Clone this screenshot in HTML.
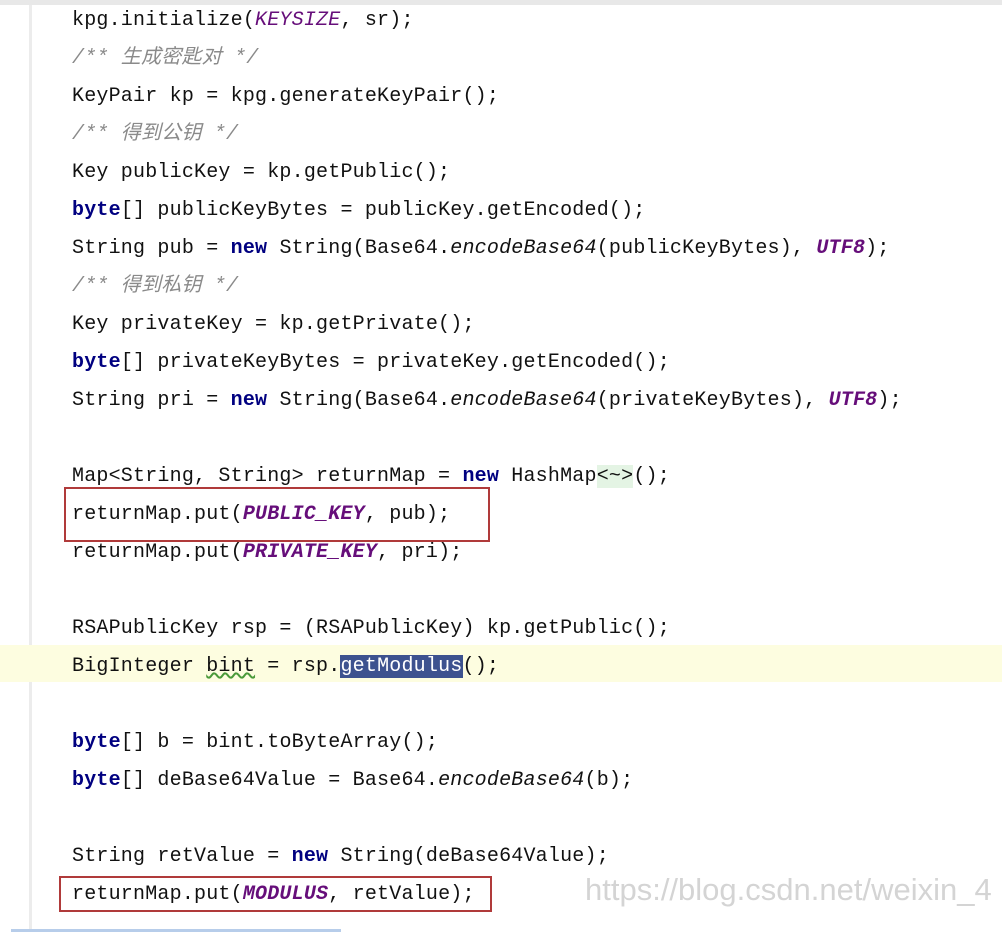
<!DOCTYPE html>
<html><head><meta charset="utf-8"><style>
html,body{margin:0;padding:0;background:#fff;width:1002px;height:932px;overflow:hidden;position:relative}
.top{position:absolute;left:0;top:0;width:1002px;height:5px;background:#e8e8e8}
.gut{position:absolute;left:29px;top:5px;width:3px;height:927px;background:#ececec}
.hl{position:absolute;left:0;top:645px;width:1002px;height:37px;background:#fdfde0}
.code{position:absolute;left:72px;top:2px;font-family:"Liberation Mono","Noto Sans CJK SC",monospace;font-size:20px;line-height:38px;color:#111;white-space:pre;letter-spacing:0.2px}
.k{color:#000080;font-weight:bold}
.c{color:#8a8a8a;font-style:italic}
.s{color:#660e7a;font-style:italic;font-weight:bold}
.i{font-style:italic}
.sel{background:#3d528f;color:#fff}
.box{position:absolute;border:2px solid #b03a3a}
.wm{position:absolute;left:585px;top:872px;font-family:"Liberation Sans",sans-serif;font-size:31px;color:#d4d4d4;white-space:nowrap}
.bot{position:absolute;left:11px;top:929px;width:330px;height:3px;background:#b7cdea}
.ul{text-decoration:underline wavy #4a9a3a}
.gr{background:#e4f4e4}
</style></head><body>
<div class="top"></div><div class="gut"></div><div class="hl"></div>
<div class="code">kpg.initialize(<span class="s" style="font-weight:normal">KEYSIZE</span>, sr);
<span class="c">/** 生成密匙对 */</span>
KeyPair kp = kpg.generateKeyPair();
<span class="c">/** 得到公钥 */</span>
Key publicKey = kp.getPublic();
<span class="k">byte</span>[] publicKeyBytes = publicKey.getEncoded();
String pub = <span class="k">new</span> String(Base64.<span class="i">encodeBase64</span>(publicKeyBytes), <span class="s">UTF8</span>);
<span class="c">/** 得到私钥 */</span>
Key privateKey = kp.getPrivate();
<span class="k">byte</span>[] privateKeyBytes = privateKey.getEncoded();
String pri = <span class="k">new</span> String(Base64.<span class="i">encodeBase64</span>(privateKeyBytes), <span class="s">UTF8</span>);

Map&lt;String, String&gt; returnMap = <span class="k">new</span> HashMap<span class="gr">&lt;~&gt;</span>();
returnMap.put(<span class="s">PUBLIC_KEY</span>, pub);
returnMap.put(<span class="s">PRIVATE_KEY</span>, pri);

RSAPublicKey rsp = (RSAPublicKey) kp.getPublic();
BigInteger <span class="ul">bint</span> = rsp.<span class="sel">getModulus</span>();

<span class="k">byte</span>[] b = bint.toByteArray();
<span class="k">byte</span>[] deBase64Value = Base64.<span class="i">encodeBase64</span>(b);

String retValue = <span class="k">new</span> String(deBase64Value);
returnMap.put(<span class="s">MODULUS</span>, retValue);</div>
<div class="box" style="left:64px;top:487px;width:422px;height:51px"></div>
<div class="box" style="left:59px;top:876px;width:429px;height:32px"></div>
<div class="wm">https://blog.csdn.net/weixin_4</div>
<div class="bot"></div>
</body></html>
